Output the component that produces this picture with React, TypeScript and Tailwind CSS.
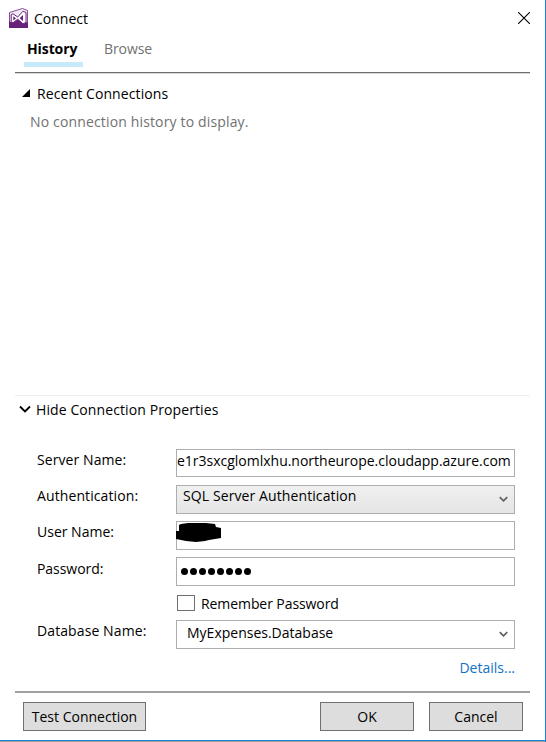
import React from "react";

const Chevron = ({ className, width = 2 }: { className: string; width?: number }) => (
  <svg viewBox="0 0 12 8" fill="none" stroke="currentColor" strokeWidth={width} className={className}>
    <path d="M1 1.5 6 6.5 11 1.5" />
  </svg>
);

const VisualStudioIcon = () => (
  <svg viewBox="0 0 19 20" className="h-5 w-[19px]">
    <path d="M0.5 4.5 13.5 0.5 18.5 2.5V19.5H0.5Z" fill="#f1e9f3" stroke="#8a4d99" />
    <path d="M0 13 4 15 9 11 14 16 18 14H19V20H0Z" fill="#68217a" />
    <path
      d="M2.2 6.6 4 5.8 8.7 9 14 3.2 17 4.6V14.4L14 15.8 8.7 11.2 4 14.8 2.2 13.8Z"
      fill="#ffffff"
      stroke="#68217a"
      strokeWidth="1"
    />
    <path d="M4.3 8.2V12.4L7 10.2ZM14 7 10.6 10.2 14 13Z" fill="#68217a" />
  </svg>
);

const Label = ({ children, className }: { children: React.ReactNode; className: string }) => (
  <div className={`w-[161px] shrink-0 pl-[22px] leading-5 ${className}`}>{children}</div>
);

const box = "flex w-[339px] shrink-0 border border-[#abadb3] leading-5";
const button = "flex h-[29px] items-center justify-center border border-[#707070] bg-[#dddddd] pb-px";

export default function App() {
  return (
    <div className="flex h-[742px] w-[546px] flex-col overflow-hidden whitespace-nowrap border-r border-r-[#1883d7] bg-white font-['Open_Sans','Noto_Sans',sans-serif] text-[14px] text-black">
      <header className="flex h-9 shrink-0 items-start pl-[9px] pt-2">
        <VisualStudioIcon />
        <span className="ml-[6px] mt-px leading-5">Connect</span>
        <svg viewBox="0 0 12 12" className="ml-auto mr-[15px] mt-1 size-3" stroke="#000" strokeWidth="1.1">
          <path d="M0 0 12 12M12 0 0 12" />
        </svg>
      </header>
      <nav className="ml-[15px] flex h-[37px] w-[515px] shrink-0 border-b border-[#6d6d6d] pl-[9px] pt-[3px]">
        <div className="h-[28px] w-[59px] border-b-[5px] border-[#c7eafb] pl-[3px] font-bold leading-5 tracking-[-0.1px]">History</div>
        <div className="ml-[21px] leading-5 tracking-[-0.1px] text-[#717171]">Browse</div>
      </nav>
      <div className="ml-[15px] h-px w-[515px] shrink-0 bg-[#d8d8d8]" />
      <section className="ml-[15px] h-[321px] w-[515px] shrink-0 pt-[10px]">
        <div className="flex items-start leading-5">
          <svg viewBox="0 0 8 8" className="ml-[7px] mt-[5px] size-2"><path d="M8 0V8H0Z" /></svg>
          <span className="ml-[7px] tracking-[0.1px]">Recent Connections</span>
        </div>
        <div className="ml-[15px] mt-2 leading-5 tracking-[0.15px] text-[#717171]">No connection history to display.</div>
      </section>
      <section className="ml-[15px] h-[296px] w-[515px] shrink-0 border-t border-[#eeeeee]">
        <div className="flex h-[53px] pt-1 leading-5">
          <Chevron className="ml-1 mt-[5px] h-2 w-3" width={1.8} />
          <span className="ml-[5px] tracking-[0.1px]">Hide Connection Properties</span>
        </div>
        <div className="flex h-9">
          <Label className="pt-px tracking-[0.08px]">Server Name:</Label>
          <div className={`${box} h-7 pt-px tracking-[-0.01px]`}><span>e1r3sxcglomlxhu.northeurope.cloudapp.azure.com</span></div>
        </div>
        <div className="flex h-9">
          <Label className="pt-px tracking-[0.1px]">Authentication:</Label>
          <div className={`${box} h-[29px] justify-between bg-linear-to-b from-[#f0f0f0] to-[#e5e5e5] pl-[6px]`}>
            <span className="tracking-[0.1px]">SQL Server Authentication</span>
            <Chevron className="mr-[6px] mt-[10px] h-[6px] w-[9px] text-[#606060]" width={2.2} />
          </div>
        </div>
        <div className="flex h-9">
          <Label className="pt-px">User Name:</Label>
          <div className={`${box} h-[29px]`}>
            <svg viewBox="0 0 45 20" className="-ml-px mt-px h-5 w-[45px]">
              <path d="M3 2 5 1 12 0H30L39 1 40 4 45 5V15L33 17 29 18 20 19 10 18 5 17 0 16V8H3Z" />
            </svg>
          </div>
        </div>
        <div className="flex h-[38px]">
          <Label className="pt-[2px] tracking-[-0.05px]">Password:</Label>
          <div className={`${box} h-[29px] items-start gap-[2px] pl-1 pt-[10px]`}>
            {Array.from({ length: 8 }, (_, i) => <i key={i} className="size-[7px] shrink-0 rounded-full bg-black" />)}
          </div>
        </div>
        <div className="flex h-[25px] pl-[162px]">
          <div className="h-4 w-[18px] border border-[#707070]" />
          <span className="-mt-px ml-[6px] leading-5 tracking-[-0.08px]">Remember Password</span>
        </div>
        <div className="flex h-[37px]">
          <Label className="pt-px tracking-[0.1px]">Database Name:</Label>
          <div className={`${box} h-[29px] justify-between pl-[10px]`}>
            <span className="pt-[2px]">MyExpenses.Database</span>
            <Chevron className="mr-[6px] mt-[10px] h-[6px] w-[9px] text-[#606060]" width={2.2} />
          </div>
        </div>
        <div className="flex justify-end pr-[15px] pt-px leading-5 text-[#1072c4]">Details...</div>
      </section>
      <footer className="ml-[15px] flex h-[49px] w-[515px] shrink-0 border-t-2 border-[#a0a0a0] pl-2 pt-[9px]">
        <div className={`${button} w-[123px]`}>Test Connection</div>
        <div className={`${button} ml-[174px] w-[94px]`}>OK</div>
        <div className={`${button} ml-[15px] w-[94px]`}>Cancel</div>
      </footer>
      <div className="h-[2px] shrink-0 border-b border-[#a0a0a0] bg-[#1883d7]" />
    </div>
  );
}
